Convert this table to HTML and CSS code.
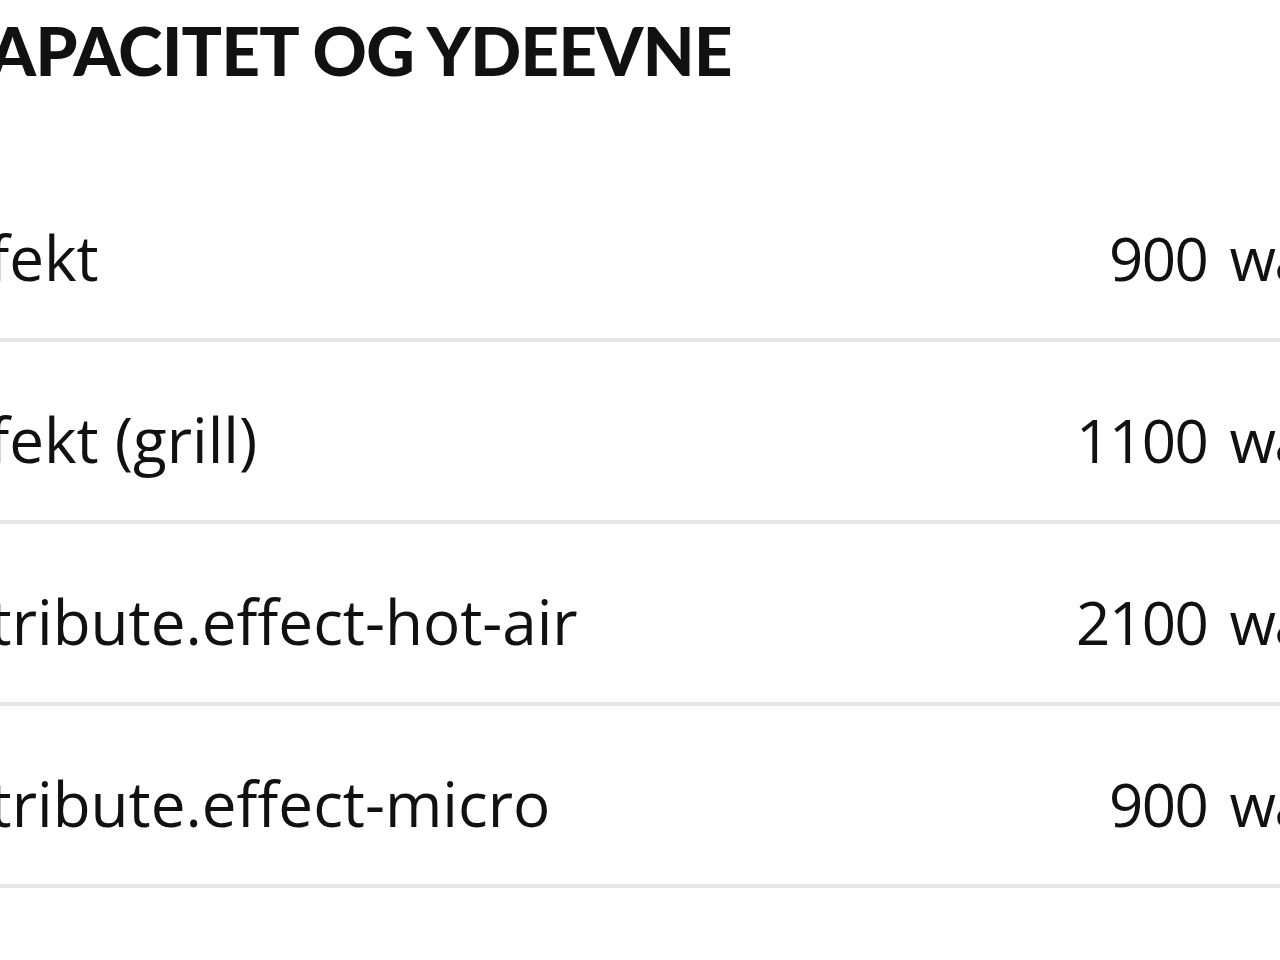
FILE: index.html
```html
<!DOCTYPE html>
<html lang="da">
<head>
<meta charset="utf-8">
<title>Kapacitet og ydeevne</title>
<link rel="stylesheet" href="styles.css">
</head>
<body>
<section class="specs">
  <h2 class="specs-title">KAPACITET OG YDEEVNE</h2>
  <div class="spec-list">
    <div class="spec-row"><span class="spec-label">Effekt</span><span class="spec-value">900 watt</span></div>
    <div class="spec-row"><span class="spec-label">Effekt (grill)</span><span class="spec-value">1100 watt</span></div>
    <div class="spec-row"><span class="spec-label">attribute.effect-hot-air</span><span class="spec-value">2100 watt</span></div>
    <div class="spec-row"><span class="spec-label">attribute.effect-micro</span><span class="spec-value">900 watt</span></div>
  </div>
</section>
</body>
</html>
```
FILE: styles.css
```css
html, body {
  margin: 0;
  padding: 0;
  background: #ffffff;
  overflow: hidden;
}

.specs {
  width: 1413px;
  margin-left: -67px;
  color: #111111;
}

.specs-title {
  margin: 0;
  padding-top: 9px;
  padding-left: 10px;
  height: 160px;
  box-sizing: border-box;
  font-family: "Lato", "Liberation Sans", sans-serif;
  font-weight: 900;
  font-size: 67px;
  line-height: 82px;
  letter-spacing: -0.6px;
  color: #111111;
}

.spec-list {
  display: flex;
  flex-direction: column;
}

.spec-row {
  display: flex;
  justify-content: space-between;
  align-items: baseline;
  padding: 54px 0 37px;
  border-bottom: 4px solid #e6e6e6;
  font-family: "Open Sans", "Liberation Sans", sans-serif;
  font-size: 62px;
  line-height: 87px;
  color: #111111;
}

.spec-label,
.spec-value {
  white-space: nowrap;
}

.spec-value {
  font-size: 60px;
  line-height: 85px;
  letter-spacing: -1.5px;
  word-spacing: 8px;
}
```
